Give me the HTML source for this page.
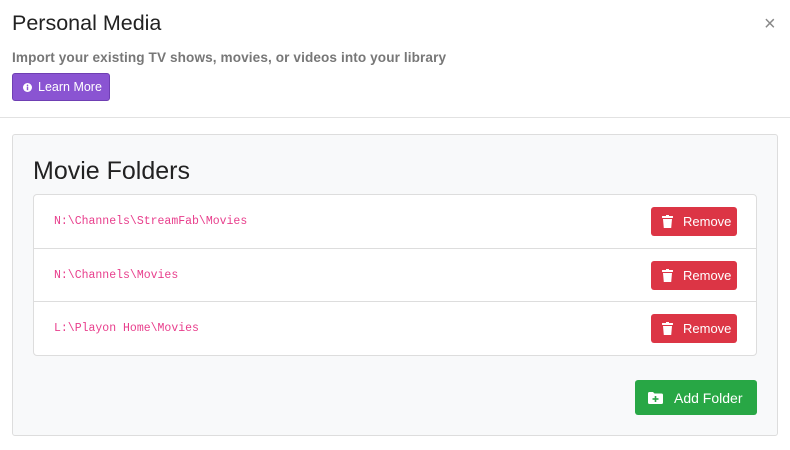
<!DOCTYPE html>
<html><head><meta charset="utf-8"><style>
*{box-sizing:border-box;margin:0;padding:0}
body{width:790px;height:450px;background:#fff;font-family:"Liberation Sans",sans-serif;position:relative;overflow:hidden;color:#212529}
.abs{position:absolute}
h1{position:absolute;left:12px;top:11px;font-size:21.5px;font-weight:400;color:#222}
.sub{left:12px;top:50px;font-size:13.6px;font-weight:bold;color:#777;letter-spacing:0.1px}
.learn{left:12px;top:73px;width:98px;height:28px;background:#8a54d2;border:1px solid #6f3fb3;border-radius:3px;color:#fff;font-size:12.5px;display:flex;align-items:center;padding-left:10px}
.close{left:764px;top:13px;font-size:20px;color:#888}
.hr{left:0;top:117px;width:790px;height:1px;background:#e2e2e2}
.card{left:12px;top:134px;width:766px;height:302px;background:#f8f9fa;border:1px solid #ddd;border-radius:3px}
h2{position:absolute;left:33px;top:157px;font-size:25px;font-weight:400;color:#222}
.list{left:33px;top:194px;width:724px;height:162px;background:#fff;border:1px solid #ddd;border-radius:4px}
.row{position:absolute;left:0;width:722px;height:53px;border-top:1px solid #ddd}
.row code{position:absolute;left:20px;top:20px;font-family:"Liberation Mono",monospace;font-size:11.5px;color:#e83e8c}
.rm{position:absolute;left:617px;top:12px;width:86px;height:29px;background:#dc3545;border-radius:3px;color:#fff;font-size:13px;display:flex;align-items:center;padding-left:11px}
.rm span{margin-left:10px}
.add{left:635px;top:380px;width:122px;height:35px;background:#28a745;border-radius:3px;color:#fff;font-size:14px;display:flex;align-items:center;padding-left:13px}
</style></head><body>
<h1>Personal Media</h1>
<div class="abs sub">Import your existing TV shows, movies, or videos into your library</div>
<div class="abs learn"><svg width="9" height="9" viewBox="0 0 10 10"><circle cx="5" cy="5" r="5" fill="#fff"/><rect x="4.2" y="4" width="1.6" height="4" fill="#8a54d2"/><circle cx="5" cy="2.6" r="0.9" fill="#8a54d2"/></svg><span style="margin-left:6px">Learn More</span></div>
<div class="abs close">×</div>
<div class="abs hr"></div>
<div class="abs card"></div>
<h2>Movie Folders</h2>
<div class="abs list">
<div class="row" style="top:0;border-top:none"><code>N:\Channels\StreamFab\Movies</code><div class="rm"><svg width="11" height="13" viewBox="0 0 11 13"><rect x="0" y="1" width="11" height="2" rx=".5" fill="#fff"/><rect x="4" y="0" width="3" height="2" fill="#fff"/><path d="M1 4h9l-.8 9H1.8z" fill="#fff"/></svg><span>Remove</span></div></div>
<div class="row" style="top:53px"><code>N:\Channels\Movies</code><div class="rm"><svg width="11" height="13" viewBox="0 0 11 13"><rect x="0" y="1" width="11" height="2" rx=".5" fill="#fff"/><rect x="4" y="0" width="3" height="2" fill="#fff"/><path d="M1 4h9l-.8 9H1.8z" fill="#fff"/></svg><span>Remove</span></div></div>
<div class="row" style="top:106px"><code>L:\Playon Home\Movies</code><div class="rm"><svg width="11" height="13" viewBox="0 0 11 13"><rect x="0" y="1" width="11" height="2" rx=".5" fill="#fff"/><rect x="4" y="0" width="3" height="2" fill="#fff"/><path d="M1 4h9l-.8 9H1.8z" fill="#fff"/></svg><span>Remove</span></div></div>
</div>
<div class="abs add"><svg width="15" height="12" viewBox="0 0 15 12"><path d="M0 1.5Q0 0 1.5 0H5l1.5 1.5h7Q15 1.5 15 3v7.5Q15 12 13.5 12h-12Q0 12 0 10.5z" fill="#fff"/><rect x="6.7" y="4" width="1.6" height="6" fill="#28a745"/><rect x="4.5" y="6.2" width="6" height="1.6" fill="#28a745"/></svg><span style="margin-left:11px">Add Folder</span></div>
</body></html>
